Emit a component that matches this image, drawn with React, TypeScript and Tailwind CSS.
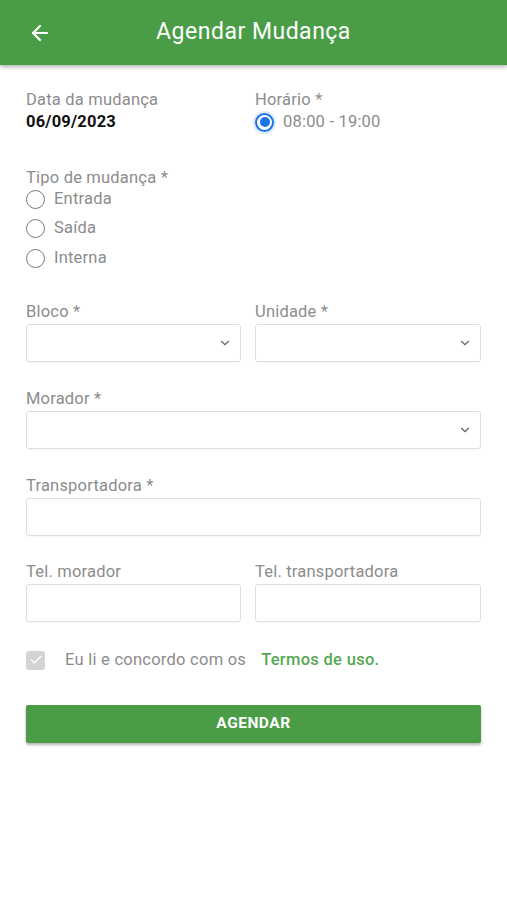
import { ArrowLeft, ChevronDown, Check } from 'lucide-react'

function Label({ children }: { children: React.ReactNode }) {
  return <p className="h-5 leading-5 text-[16.5px] tracking-[0.2px] text-[#8c8c8c]">{children}</p>
}

function Radio({ checked = false, label }: { checked?: boolean; label: string }) {
  return (
    <div className="flex items-center gap-[9px] h-[22px]">
      {checked ? (
        <span className="w-[19px] h-[19px] rounded-full border-2 border-[#1a73e8] flex items-center justify-center shadow-[0_0_0_2px_rgba(26,115,232,0.15)]">
          <span className="w-[10px] h-[10px] rounded-full bg-[#1a73e8]" />
        </span>
      ) : (
        <span className="w-[19px] h-[19px] rounded-full border-[1.5px] border-[#7a7a7a]" />
      )}
      <span className="text-[16.5px] tracking-[0.2px] text-[#8c8c8c]">{label}</span>
    </div>
  )
}

function Select() {
  return (
    <div className="mt-[2px] h-[38px] rounded-[3px] border border-[#dedede] shadow-[0_1px_1px_rgba(0,0,0,0.04)] flex items-center justify-end pr-[8px]">
      <ChevronDown size={14} strokeWidth={2} className="text-[#666]" />
    </div>
  )
}

function Input() {
  return <div className="mt-[2px] h-[38px] rounded-[3px] border border-[#dedede] shadow-[0_1px_1px_rgba(0,0,0,0.04)]" />
}

export default function App() {
  return (
    <div className="w-[507px] h-[900px] bg-white font-['Roboto',sans-serif]">
      <header className="h-[65px] bg-[#4a9d46] shadow-[0_2px_4px_rgba(0,0,0,0.3)] flex items-center relative">
        <ArrowLeft size={24} strokeWidth={2.2} className="text-white ml-[28px]" />
        <h1 className="absolute left-0 right-0 text-center text-white text-[23px] font-normal tracking-[0.5px]">Agendar Mudança</h1>
      </header>

      <main className="px-[26px] pt-[25px] w-[507px]">
        <div className="grid grid-cols-[215px_1fr] gap-x-[14px]">
          <div>
            <Label>Data da mudança</Label>
            <p className="mt-[2px] h-5 leading-5 text-[16.5px] tracking-[0.2px] font-bold text-[#111]">06/09/2023</p>
          </div>
          <div>
            <Label>Horário *</Label>
            <div className="mt-[1px]">
              <Radio checked label="08:00 - 19:00" />
            </div>
          </div>
        </div>

        <div className="mt-[35px]">
          <Label>Tipo de mudança *</Label>
          <div className="flex flex-col gap-[7.5px]">
            <Radio label="Entrada" />
            <Radio label="Saída" />
            <Radio label="Interna" />
          </div>
        </div>

        <div className="mt-[33px] grid grid-cols-[215px_1fr] gap-x-[14px]">
          <div>
            <Label>Bloco *</Label>
            <Select />
          </div>
          <div>
            <Label>Unidade *</Label>
            <Select />
          </div>
        </div>

        <div className="mt-[27px]">
          <Label>Morador *</Label>
          <Select />
        </div>

        <div className="mt-[27px]">
          <Label>Transportadora *</Label>
          <Input />
        </div>

        <div className="mt-[26px] grid grid-cols-[215px_1fr] gap-x-[14px]">
          <div>
            <Label>Tel. morador</Label>
            <Input />
          </div>
          <div>
            <Label>Tel. transportadora</Label>
            <Input />
          </div>
        </div>

        <div className="mt-[29px] flex items-center h-[18px]">
          <span className="w-[19px] h-[19px] rounded-[3px] bg-[#d4d4d4] flex items-center justify-center">
            <Check size={14} strokeWidth={2.5} className="text-white" />
          </span>
          <span className="ml-[20px] text-[16.5px] tracking-[0.25px] text-[#8c8c8c]">Eu li e concordo com os</span>
          <span className="ml-[15px] text-[16.5px] tracking-[0.3px] text-[#55a851] font-medium">Termos de uso.</span>
        </div>

        <button className="mt-[36px] w-full h-[38px] rounded-[2px] bg-[#4a9d46] shadow-[0_2px_3px_rgba(0,0,0,0.3)] text-white text-[15.5px] font-bold tracking-[0.5px]">
          AGENDAR
        </button>
      </main>
    </div>
  )
}
